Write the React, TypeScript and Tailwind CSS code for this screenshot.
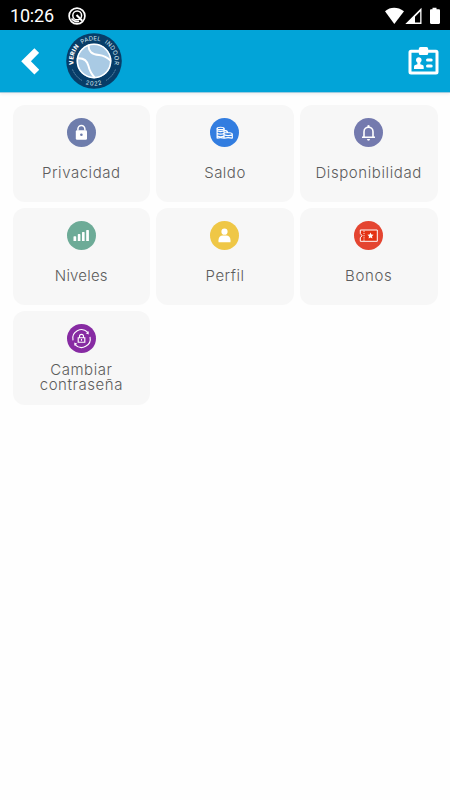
import React from 'react';

function StatusBar() {
  return (
    <div className="flex h-[30px] items-center bg-black pl-[10px] pr-[10px] text-white">
      <span className="w-[45px] pt-[2px] font-['Roboto',sans-serif] text-[18px] leading-[28px] tracking-[-0.2px]">10:26</span>
      <svg className="ml-[12px] mt-px h-[20px] w-[20px]" viewBox="0 0 20 20" fill="none" stroke="white">
        <circle cx="10" cy="10" r="7.9" strokeWidth="1.7" />
        <circle cx="10.200" cy="9.400" r="4.400" strokeWidth="1.500" />
        <path d="M9.500 9l5.700 5.800" strokeWidth="2" />
        <path d="M4.500 12.500c2 2.500 4.800 3.600 7.500 2.800" strokeWidth="1.600" />
      </svg>
      <svg className="ml-auto mt-px h-[18px] w-[56px]" viewBox="0 0 56 18" fill="white">
        <path d="M1 4.300C6.500-.3 13.500-.3 20 4.300L10.300 17Z" />
        <path fillRule="evenodd" d="M37.500.8V17H21.300ZM36.200 4.500L31 9.700V15.500H36.200Z" />
        <path d="M48.500.8h4v1.400h2.300c.7 0 1.200.5 1.200 1.200v12.400c0 .7-.5 1.200-1.200 1.200h-7.600c-.7 0-1.200-.5-1.200-1.200V3.400c0-.7.500-1.200 1.200-1.200h1.300z" />
      </svg>
    </div>
  );
}

function ClubLogo() {
  return (
    <svg className="ml-[26px] h-[58px] w-[58px]" viewBox="-29 -29 58 58">
      <defs>
        <path id="arcTop" d="M-17.900 10.350A20.700 20.700 0 1 1 17.900 10.350" />
        <path id="arcBottom" d="M-20 14.400A24.650 24.650 0 0 0 20 14.400" />
        <clipPath id="ball"><circle r="17.300" /></clipPath>
      </defs>
      <circle r="27.800" fill="#073d68" />
      <circle r="17.300" fill="#a9cae4" />
      <g clipPath="url(#ball)" fill="none" stroke="white" strokeWidth="1.900">
        <path d="M-18-2.500C-11-3.500-7-1-5.500 5C-4.500 10-3 12.500 1 17" />
        <path d="M-5-18C-7-9-1-6.500 5-6C10-5.500 13-4 17 0" />
      </g>
      <circle r="16.700" fill="none" stroke="white" strokeWidth="1.600" />
      <g fill="#d9e8f2" fontFamily="Inter, sans-serif" fontSize="5.900">
        <text fill="white" fontWeight="800" letterSpacing=".35"><textPath href="#arcTop" startOffset="7">VERIN</textPath></text>
        <text letterSpacing=".1"><textPath href="#arcTop" startOffset="30.500">PADEL</textPath></text>
        <text letterSpacing=".45"><textPath href="#arcTop" startOffset="54">INDOOR</textPath></text>
        <text letterSpacing=".8"><textPath href="#arcBottom" startOffset="14.500">2022</textPath></text>
      </g>
      <g fill="none" stroke="#6f98b5" strokeWidth=".8" strokeDasharray="2 .6">
        <path d="M-21.500 8.500A23 23 0 0 0-12 19.500M21.500 8.500A23 23 0 0 1 12 19.500" />
      </g>
    </svg>
  );
}

function Header() {
  return (
    <header className="flex h-[63px] items-center border-b border-[#9dcce0] bg-[#02a4d8] pl-[21px] pr-[11px] shadow-[0_1px_3px_rgba(0,0,0,0.08)]">
      <svg className="h-[27px] w-[18px]" viewBox="0 0 18 27" fill="white">
        <path d="M.2 13.300L13.400.200 18.200 4.900 9.900 13.300 18.200 21.700 13.400 26.400Z" />
      </svg>
      <ClubLogo />
      <svg className="ml-auto h-[30px] w-[31px]" viewBox="0 0 31 30" fill="white">
        <path fillRule="evenodd" d="M3 3.800H10.800V2.700Q10.800 1 12.500 1H18.500Q20.200 1 20.200 2.700V3.800H28Q30.500 3.800 30.500 6.300V26Q30.500 28.500 28 28.500H3Q.5 28.500.5 26V6.300Q.5 3.800 3 3.800ZM3.500 6.800V25.500H27.500V6.800H20.200V7.500Q20.200 9 18.700 9H12.300Q10.800 9 10.800 7.500V6.800Z" />
        <path d="M8 14.100c0-3.800 5.600-3.800 5.600 0 0 1.200-.6 2-1.300 2.600v1.600l2.200.8q1.200.4 1.200 1.600V23H6v-2.300q0-1.200 1.200-1.600l2.200-.8v-1.600C8.600 16.100 8 15.300 8 14.100Z" />
        <rect x="18" y="12.600" width="6.700" height="3" rx="1.500" /><rect x="18" y="18.400" width="6.700" height="3" rx="1.500" />
      </svg>
    </header>
  );
}

const lock = (
  <>
    <rect x="8.800" y="12.200" width="11.200" height="9.600" rx="1.300" fill="white" />
    <path d="M10.900 12.500V11a3.500 3.500 0 0 1 7 0v1.500" fill="none" stroke="white" strokeWidth="1.500" />
    <circle cx="14.400" cy="16.800" r="1.300" fill="#6e7dac" />
  </>
);
const coins = (
  <g fill="none" stroke="white" strokeWidth="1.150">
    <ellipse cx="10.600" cy="10.400" rx="3.500" ry="1.200" />
    <path d="M7.100 10.400v10.200M14.100 10.400v10.200M7.100 12.600q3.500 2 7 0M7.100 15.200q3.500 2 7 0M7.100 17.800q3.500 2 7 0M7.100 20.300q3.500-1.500 7 0" />
    <path d="M14.100 14.700h5.300q2.900.3 2.900 1.500v4.400M14.100 16.800q4.100 1.600 8.200 0M14.100 20.300q4.100-1.500 8.200 0M14.100 12.400q3 0 3.500 2" />
  </g>
);
const bell = (
  <>
    <path d="M8 19.300h13M10 19v-5.200c0-6 9-6 9 0V19" fill="none" stroke="white" strokeWidth="1.600" />
    <path d="M13.400 9V7.600q1.100-1.400 2.200 0V9zM13 21h3q0 1.700-1.500 1.700T13 21Z" fill="white" />
  </>
);
const bars = <path fill="white" d="M6.500 15.900q0-.6.600-.6h1.500q.6 0 .6.600v4h-2.700zM10.800 13.700q0-.6.600-.6h1.400q.6 0 .6.600v6.200h-2.600zM15 11.600q0-.6.600-.6H17q.6 0 .6.600v8.300H15zM19.200 9.500q0-.6.600-.6h1.500q.6 0 .6.600v10.400h-2.700z" />;
const person = (
  <g fill="white"><circle cx="14.500" cy="10.700" r="3.100" /><path d="M8.500 21v-1.700c0-3 1.700-4.700 4.200-4.700h3.600c2.500 0 4.200 1.700 4.200 4.700V21q0 .3-.3.300H8.800q-.3 0-.3-.3Z" /></g>
);
const ticket = (
  <>
    <path d="M6.300 9h17v11.300h-17v-3.500l1.800-2.100-1.800-2.200z" fill="#e43314" stroke="white" strokeWidth="1" strokeLinejoin="round" />
    <path d="M10 9.700v10" fill="none" stroke="white" strokeWidth=".9" strokeDasharray="1.200 1" />
    <path fill="white" d="m16.500 11.500.9 2 2.200.3-1.600 1.500.4 2.200-1.900-1-1.900 1 .4-2.200-1.600-1.500 2.200-.3z" />
  </>
);
const lockCycle = (
  <>
    <g fill="none" stroke="white" strokeWidth="1.150">
      <path d="M6 16.300A8.700 8.700 0 0 1 20.600 8.200M23 12.800A8.700 8.700 0 0 1 8.300 20.800M11.200 13.700h6.600v4.500h-6.600zM12.500 13.700v-1.400a2 2 0 0 1 4 0v1.400M14.500 15.100v1.600" />
    </g>
    <path d="M21.700 7.300v3.200l-3-1.200zM7.300 21.800v-3.200l3 1.200z" fill="white" />
  </>
);

const items = [
  { label: 'Privacidad', icon: lock, color: 'bg-[#6e7dac]', tracking: 'tracking-[0.55px]' },
  { label: 'Saldo', icon: coins, color: 'bg-[#327de0]', tracking: 'tracking-[0.5px]' },
  { label: 'Disponibilidad', icon: bell, color: 'bg-[#747aae]', tracking: 'tracking-[0.6px]' },
  { label: 'Niveles', icon: bars, color: 'bg-[#6dab97]', tracking: 'tracking-[0.2px]' },
  { label: 'Perfil', icon: person, color: 'bg-[#efc746]', tracking: 'tracking-[0.5px]' },
  { label: 'Bonos', icon: ticket, color: 'bg-[#e44531]', tracking: 'tracking-[0.65px]' },
  { label: 'Cambiar contraseña', icon: lockCycle, color: 'bg-[#872ba3]', tracking: 'tracking-[0.55px]' },
];

export default function App() {
  return (
    <div className="h-[800px] w-[450px] overflow-hidden bg-[#fefefe]">
      <StatusBar />
      <Header />
      <main className="grid grid-cols-3 gap-[6px] px-[12.500px] pt-[12px]">
        {items.map(({ label, icon, color, tracking }, index) => {
          const double = index === 6;
          return (
            <div key={label} className={`flex flex-col items-center rounded-[12px] bg-[#f7f7f7] pt-[13px] ${double ? 'h-[94px]' : 'h-[97px]'}`}>
              <div className={`h-[29px] w-[29px] rounded-full ${color}`}><svg className="h-full w-full" viewBox="0 0 29 29">{icon}</svg></div>
              <span className={`w-[110px] text-center font-['Inter',sans-serif] text-[15px] font-light leading-[15px] text-[#5c5c5c] ${tracking} ${double ? 'mt-[9px]' : 'mt-[18px]'}`}>{label}</span>
            </div>
          );
        })}
      </main>
    </div>
  );
}
